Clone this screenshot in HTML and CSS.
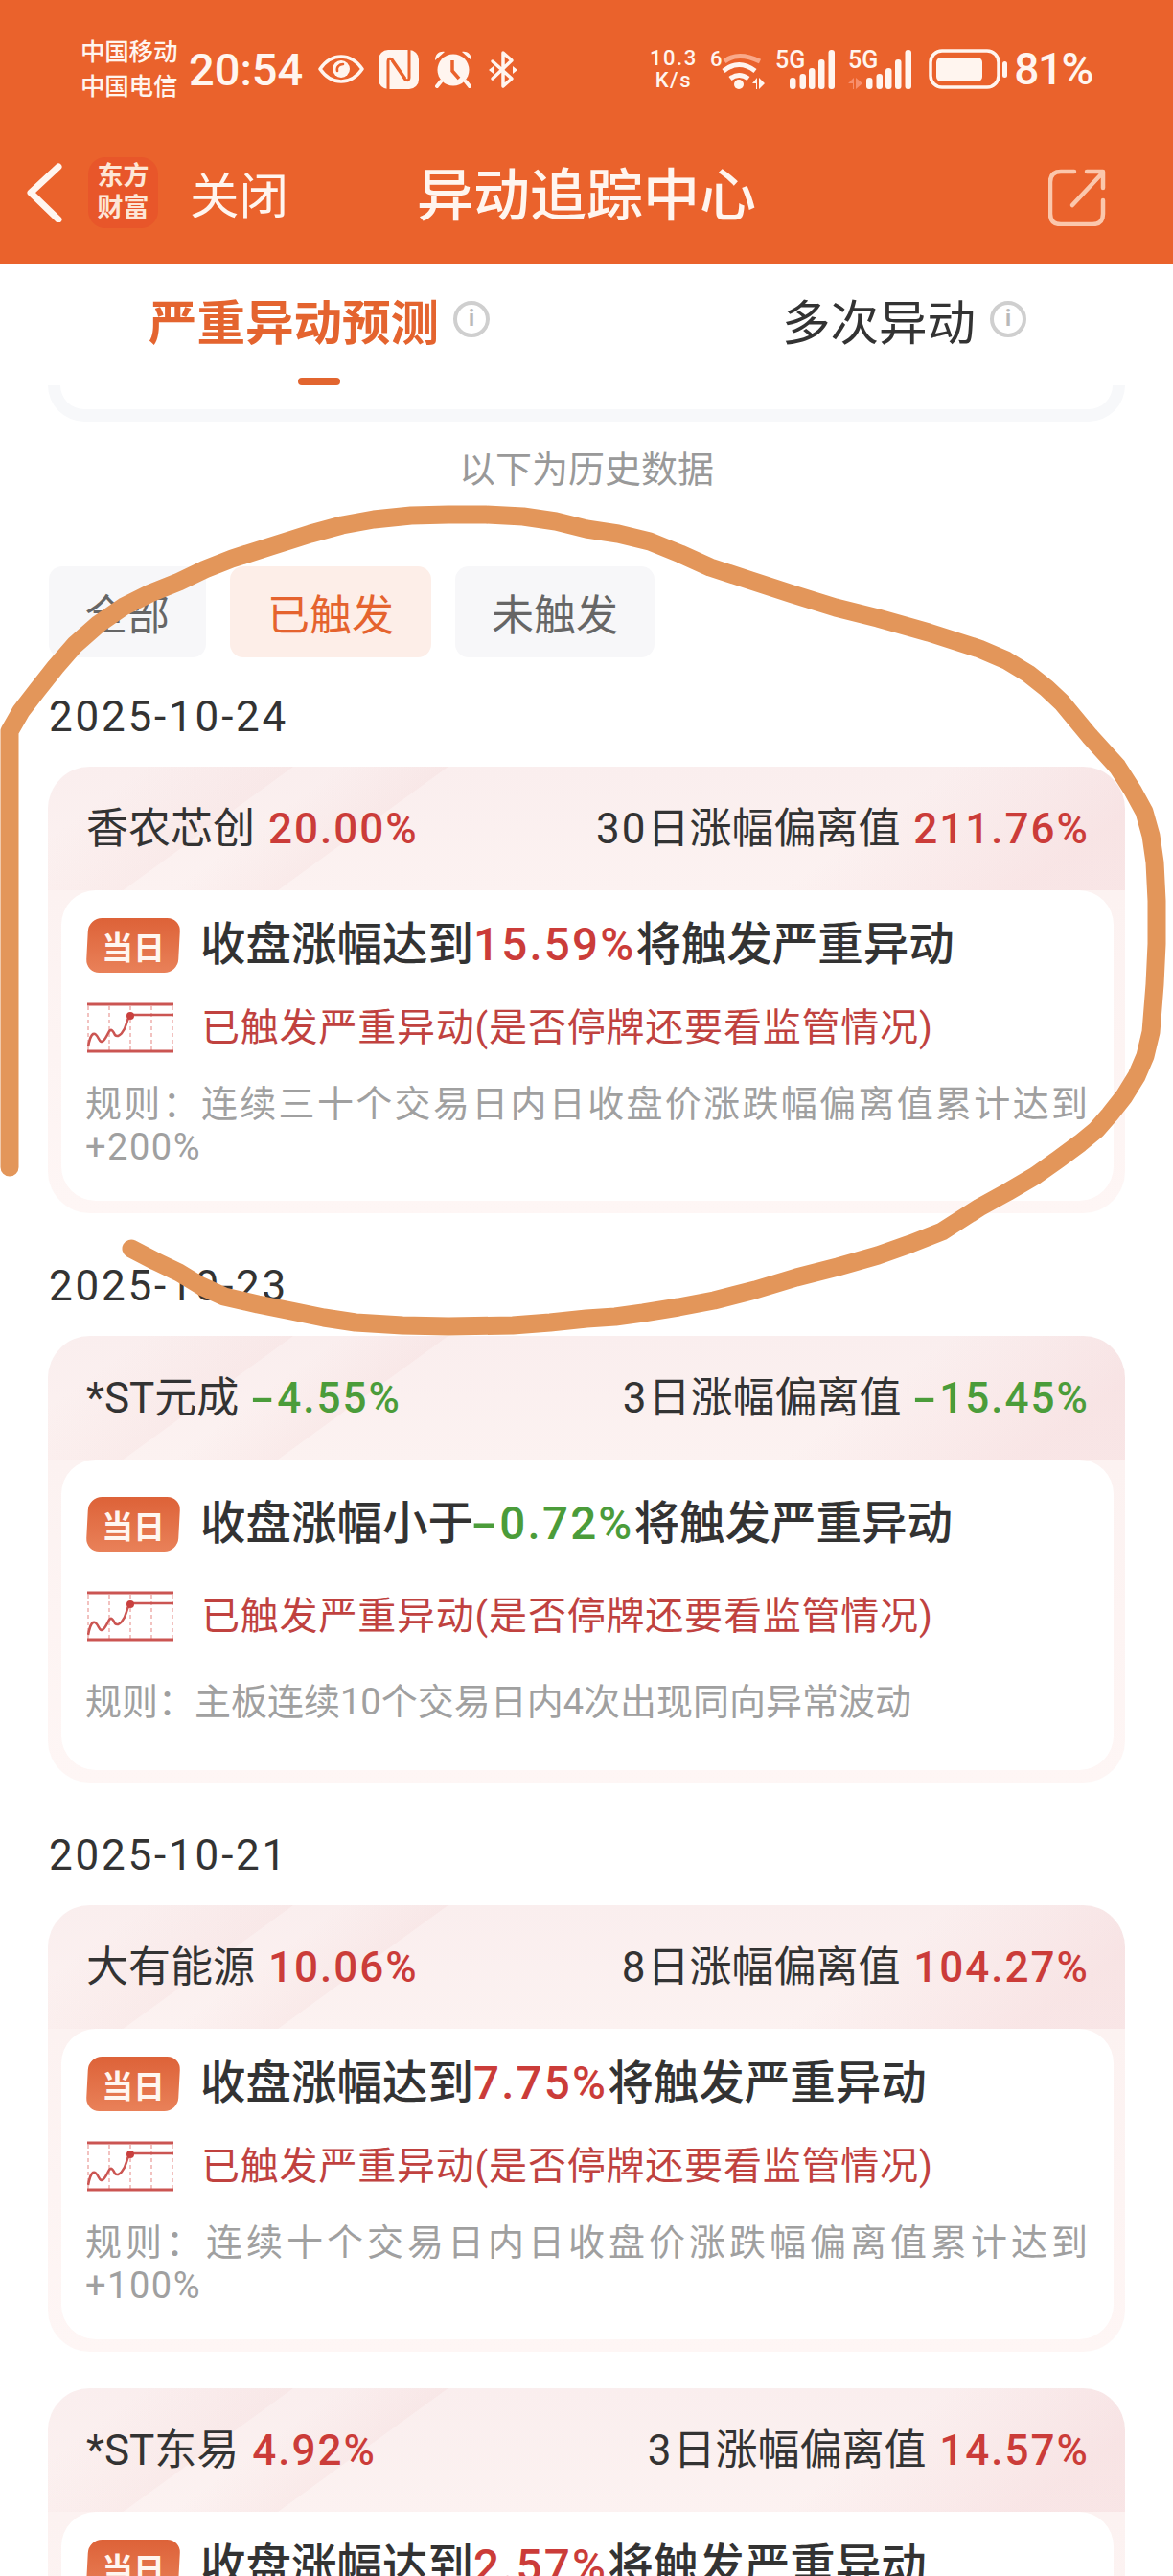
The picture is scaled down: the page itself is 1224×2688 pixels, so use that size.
FILE: index.html

```html
<!DOCTYPE html>
<html lang="zh-CN">
<head>
    <meta charset="UTF-8">
    <meta name="viewport" content="width=device-width, initial-scale=1.0">
    <title>异动追踪中心</title>
    <link rel="stylesheet" href="styles.css">
</head>
<body>

<header class="top">
    <div class="status">
        <div class="carrier">
            <span>中国移动</span>
            <span>中国电信</span>
        </div>
        <span class="time">20:54</span>
        <svg class="ic-eye" width="48" height="30" viewBox="0 0 48 30">
            <path d="M2 15C9 5 17 2 24 2s15 3 22 13c-7 10-15 13-22 13S9 25 2 15z" fill="none" stroke="#fff5ef" stroke-width="3.5" stroke-linejoin="round"/>
            <circle cx="24" cy="15" r="9" fill="#fff5ef"/>
            <path d="M20 17c-1-4 2-7 6-7" fill="none" stroke="#ea622c" stroke-width="2.6" stroke-linecap="round"/>
        </svg>
        <svg class="ic-nfc" width="42" height="41" viewBox="0 0 42 41">
            <rect width="42" height="41" rx="10" fill="#fff5ef"/>
            <path d="M10 41V12q0-4 4-2l14 20M32 0v29q0 4-4 2L14 11" fill="none" stroke="#ea622c" stroke-width="3"/>
        </svg>
        <svg class="ic-alarm" width="42" height="40" viewBox="0 0 42 40">
            <circle cx="21" cy="21" r="16.5" fill="#fff5ef"/>
            <path d="M2 11C2 4 7 1 12 2zM40 11c0-7-5-10-10-9z" fill="#fff5ef"/>
            <path d="M8 33l-4 5M34 33l4 5" stroke="#fff5ef" stroke-width="4" stroke-linecap="round"/>
            <path d="M20 11v11l7 8" fill="none" stroke="#ea622c" stroke-width="3.5"/>
        </svg>
        <svg class="ic-bt" width="32" height="41" viewBox="0 0 32 41">
            <path d="M5 12l20 18-9 8V3l9 8L5 30" fill="none" stroke="#fff5ef" stroke-width="3.5" stroke-linejoin="round" stroke-linecap="round"/>
            <path d="M1 21l5-4v8zM31 21l-5-4v8z" fill="#fff5ef"/>
        </svg>

        <div class="status-right">
            <div class="speed">
                <span>10.3</span>
                <span>K/s</span>
            </div>
            <svg class="ic-wifi" width="57" height="54" viewBox="0 -6 57 54">
                <text class="sig-text" x="0" y="18" font-size="22">6</text>
                <path d="M15 13q14-11 37 0" fill="none" stroke="#f9a98a" stroke-width="5"/>
                <path d="M14 23q16-13 33 0" fill="none" stroke="#fff5ef" stroke-width="5"/>
                <path d="M21 31q9-7 19 0" fill="none" stroke="#fff5ef" stroke-width="5"/>
                <circle cx="30" cy="37" r="5" fill="#fff5ef"/>
                <path d="M44 36l5-6v12h-1v-6zM51 30v12l6-6z" fill="#fff5ef"/>
            </svg>
            <svg class="ic-signal" width="63" height="54" viewBox="0 -6 63 54">
                <text class="sig-text" x="0" y="20" font-size="25">5G</text>
                <rect x="15" y="30" width="6.5" height="12" rx="3" fill="#fff5ef"/>
                <rect x="25.5" y="26" width="6.5" height="16" rx="3" fill="#fff5ef"/>
                <rect x="35" y="20" width="6.5" height="22" rx="3" fill="#fff5ef"/>
                <rect x="45" y="11" width="6.5" height="31" rx="3" fill="#fff5ef"/>
                <rect x="55.5" y="1" width="6.5" height="41" rx="3" fill="#fff5ef"/>
            </svg>
            <svg class="ic-signal" width="67" height="54" viewBox="0 -6 67 54">
                <text class="sig-text" x="0" y="20" font-size="25">5G</text>
                <path d="M0 36l6-6v12h-1v-6zM8 30v12l7-6z" fill="#f78f6c"/>
                <rect x="19" y="30" width="6.5" height="12" rx="3" fill="#fff5ef"/>
                <rect x="29.5" y="26" width="6.5" height="16" rx="3" fill="#fff5ef"/>
                <rect x="39" y="20" width="6.5" height="22" rx="3" fill="#fff5ef"/>
                <rect x="49" y="11" width="6.5" height="31" rx="3" fill="#fff5ef"/>
                <rect x="59.5" y="1" width="6.5" height="41" rx="3" fill="#fff5ef"/>
            </svg>
            <svg class="ic-battery" width="82" height="42" viewBox="0 0 82 42">
                <rect x="2" y="2" width="71" height="38" rx="12" fill="none" stroke="#fff5ef" stroke-width="3.5"/>
                <rect x="8" y="9" width="48" height="25" rx="5" fill="#fff5ef"/>
                <rect x="77" y="13" width="5" height="17" rx="2.5" fill="#fff5ef"/>
            </svg>
            <span class="percent">81%</span>
        </div>
    </div>

    <nav class="nav">
        <div class="nav-left">
            <svg class="ic-back" width="38" height="62" viewBox="0 0 38 62">
                <path d="M33 4L4 31l29 28" fill="none" stroke="#fff5ef" stroke-width="7" stroke-linecap="round" stroke-linejoin="round"/>
            </svg>
            <div class="logo">
                <span>东方</span>
                <span>财富</span>
            </div>
            <span class="close">关闭</span>
        </div>
        <h1 class="title">异动追踪中心</h1>
        <div class="nav-right">
            <svg width="60" height="60" viewBox="0 0 60 60">
                <path d="M27 3H13Q2 3 2 14v33q0 11 11 11h33q11 0 11-11V33" fill="none" stroke="#fbc7ac" stroke-width="4.5" stroke-linecap="round"/>
                <path d="M25 38L55 6M40 3h17v17" fill="none" stroke="#fbc7ac" stroke-width="4.5" stroke-linecap="round" stroke-linejoin="round"/>
            </svg>
        </div>
    </nav>
</header>

<div class="tabs">
    <div class="tab active">
        <span>严重异动预测</span>
        <span class="info">i</span>
    </div>
    <div class="tab">
        <span>多次异动</span>
        <span class="info">i</span>
    </div>
</div>

<main class="content">
    <div class="prev-card"></div>
    <p class="history-note">以下为历史数据</p>

    <div class="filters">
        <span class="chip chip-all">全部</span>
        <span class="chip chip-on">已触发</span>
        <span class="chip chip-off">未触发</span>
    </div>

    <div class="date">2025-10-24</div>
    <section class="card">
        <div class="card-head">
            <div>香农芯创 <span class="num up">20.00%</span></div>
            <div><span class="num">30</span>日涨幅偏离值 <span class="num up">211.76%</span></div>
        </div>
        <div class="card-body">
            <div class="row">
                <span class="badge"><span>当日</span></span>
                <span class="cond">收盘涨幅达到<span class="num up">15.59%</span>将触发严重异动</span>
            </div>
            <div class="row">
                <svg class="trend" width="90" height="53" viewBox="0 0 90 53">
                    <path d="M1 4v46M23 4v46M45 4v46M67 4v46M89 4v46" stroke="#eeaeac" stroke-width="1.5" stroke-dasharray="4 3"/>
                    <path d="M0 2h90M0 51h90" stroke="#cb5552" stroke-width="3"/>
                    <path d="M1 46C4 30 8 30 12 38c3 6 6 2 10-6 3-6 5-2 7 2 4 4 10-4 12-12q2-8 6-9h43" fill="none" stroke="#cb5552" stroke-width="2.6"/>
                    <circle cx="45" cy="14" r="4" fill="#c9403e"/>
                </svg>
                <span class="fired">已触发严重异动(是否停牌还要看监管情况)</span>
            </div>
            <p class="rule">规则：连续三十个交易日内日收盘价涨跌幅偏离值累计达到<span class="rule-pct">+200%</span></p>
        </div>
    </section>

    <div class="date">2025-10-23</div>
    <section class="card">
        <div class="card-head">
            <div>*ST元成 <span class="num down"><span class="minus">-</span>4.55%</span></div>
            <div><span class="num">3</span>日涨幅偏离值 <span class="num down"><span class="minus">-</span>15.45%</span></div>
        </div>
        <div class="card-body card-body-short">
            <div class="row">
                <span class="badge"><span>当日</span></span>
                <span class="cond">收盘涨幅小于<span class="num down"><span class="minus">-</span>0.72%</span>将触发严重异动</span>
            </div>
            <div class="row">
                <svg class="trend" width="90" height="53" viewBox="0 0 90 53">
                    <path d="M1 4v46M23 4v46M45 4v46M67 4v46M89 4v46" stroke="#eeaeac" stroke-width="1.5" stroke-dasharray="4 3"/>
                    <path d="M0 2h90M0 51h90" stroke="#cb5552" stroke-width="3"/>
                    <path d="M1 46C4 30 8 30 12 38c3 6 6 2 10-6 3-6 5-2 7 2 4 4 10-4 12-12q2-8 6-9h43" fill="none" stroke="#cb5552" stroke-width="2.6"/>
                    <circle cx="45" cy="14" r="4" fill="#c9403e"/>
                </svg>
                <span class="fired">已触发严重异动(是否停牌还要看监管情况)</span>
            </div>
            <p class="rule">规则：主板连续10个交易日内4次出现同向异常波动</p>
        </div>
    </section>

    <div class="date">2025-10-21</div>
    <section class="card">
        <div class="card-head">
            <div>大有能源 <span class="num up">10.06%</span></div>
            <div><span class="num">8</span>日涨幅偏离值 <span class="num up">104.27%</span></div>
        </div>
        <div class="card-body">
            <div class="row">
                <span class="badge"><span>当日</span></span>
                <span class="cond">收盘涨幅达到<span class="num up">7.75%</span>将触发严重异动</span>
            </div>
            <div class="row">
                <svg class="trend" width="90" height="53" viewBox="0 0 90 53">
                    <path d="M1 4v46M23 4v46M45 4v46M67 4v46M89 4v46" stroke="#eeaeac" stroke-width="1.5" stroke-dasharray="4 3"/>
                    <path d="M0 2h90M0 51h90" stroke="#cb5552" stroke-width="3"/>
                    <path d="M1 46C4 30 8 30 12 38c3 6 6 2 10-6 3-6 5-2 7 2 4 4 10-4 12-12q2-8 6-9h43" fill="none" stroke="#cb5552" stroke-width="2.6"/>
                    <circle cx="45" cy="14" r="4" fill="#c9403e"/>
                </svg>
                <span class="fired">已触发严重异动(是否停牌还要看监管情况)</span>
            </div>
            <p class="rule">规则：连续十个交易日内日收盘价涨跌幅偏离值累计达到<span class="rule-pct">+100%</span></p>
        </div>
    </section>

    <section class="card">
        <div class="card-head">
            <div>*ST东易 <span class="num up">4.92%</span></div>
            <div><span class="num">3</span>日涨幅偏离值 <span class="num up">14.57%</span></div>
        </div>
        <div class="card-body">
            <div class="row">
                <span class="badge"><span>当日</span></span>
                <span class="cond">收盘涨幅达到<span class="num up">2.57%</span>将触发严重异动</span>
            </div>
        </div>
    </section>
</main>

<!-- hand drawn circle on top of the screenshot -->
<svg class="scribble" width="1224" height="2688" viewBox="0 0 1224 2688">
    <polyline points="10,1218 10,763 22,742 39,720 58,696 78,673 103,651 129,633 157,619 187,607 214,594 242,583 283,570 324,557 357,548 390,542 429,538 468,537 507,537 546,539 580,544 612,552 645,557 678,565 710,578 741,592 784,606 827,620 872,634 916,645 969,660 1022,677 1050,689 1073,703 1092,718 1108,733 1137,768 1166,800 1182,825 1194,847 1201,872 1205,900 1207,940 1207,985 1205,1027 1201,1077 1195,1102 1186,1123 1173,1144 1158,1163 1144,1179 1127,1193 1104,1210 1080,1227 1051,1244 1022,1260 983,1285 950,1298 916,1310 874,1322 831,1333 788,1346 745,1357 708,1364 671,1370 642,1374 612,1376 574,1380 535,1383 468,1384 420,1383 371,1380 338,1375 304,1368 269,1361 234,1353 210,1342 187,1328 162,1316 137,1303" fill="none" stroke="#e3965a" stroke-width="19" stroke-linecap="round" stroke-linejoin="round"/>
</svg>

</body>
</html>
```

FILE: styles.css

```css
html, body {
    margin: 0;
    padding: 0;
}
body {
    position: relative;
    width: 1224px;
    height: 2688px;
    overflow: hidden;
    background: #fff;
    font-family: Roboto, "Noto Sans CJK SC", sans-serif;
    color: #333;
}

/* orange header */
.top {
    height: 275px;
    background: #ea622c;
    color: #fff5ef;
}
.status {
    display: flex;
    align-items: center;
    height: 144px;
    padding: 0 84px;
}
.carrier {
    display: flex;
    flex-direction: column;
    width: 102px;
    font-size: 25.5px;
    line-height: 36px;
    font-weight: 500;
    white-space: nowrap;
    letter-spacing: -.2px;
}
.time {
    margin-left: 11px;
    width: 118px;
    font-size: 47px;
    font-weight: 500;
    white-space: nowrap;
}
.ic-eye { margin-left: 17px; }
.ic-nfc, .ic-alarm, .ic-bt { margin-left: 15px; }
.status-right {
    display: flex;
    align-items: center;
    margin-left: auto;
}
.speed {
    display: flex;
    flex-direction: column;
    align-items: center;
    width: 53px;
    font-size: 22px;
    line-height: 23px;
    font-weight: 500;
    letter-spacing: 1.5px;
}
.sig-text {
    fill: #fff5ef;
    font-weight: 500;
}
.ic-wifi { margin-left: 12px; }
.ic-signal { margin-left: 11px; }
.ic-signal + .ic-signal { margin-left: 13px; }
.ic-battery { margin-left: 17px; }
.percent {
    margin-left: 7px;
    font-size: 46px;
    font-weight: 500;
    letter-spacing: -1.5px;
}

.nav {
    display: grid;
    grid-template-columns: 1fr auto 1fr;
    align-items: center;
    height: 113px;
    padding-bottom: 18px;
}
.nav-left {
    display: flex;
    align-items: center;
    padding-left: 28px;
}
.logo {
    display: flex;
    flex-direction: column;
    align-items: center;
    justify-content: center;
    width: 73px;
    height: 74px;
    margin-left: 26px;
    background: #e8562a;
    border-radius: 18px;
    font-size: 27px;
    line-height: 33px;
    font-weight: 700;
    color: #fde6d6;
}
.close {
    margin-left: 33px;
    font-size: 51.5px;
}
.title {
    margin: 0 0 2px;
    font-size: 59px;
    font-weight: 500;
}
.nav-right {
    display: flex;
    justify-content: flex-end;
    padding: 10px 70px 0 0;
}

/* tabs */
.tabs {
    display: flex;
    justify-content: space-between;
    align-items: center;
    height: 127px;
    padding: 0 153px 0 155px;
    box-sizing: border-box;
    background: #fff;
}
.tab {
    position: relative;
    display: flex;
    align-items: center;
    gap: 15px;
    height: 127px;
    padding-bottom: 12px;
    box-sizing: border-box;
    font-size: 50.5px;
    color: #333;
}
.tab.active {
    color: #e4642f;
    font-weight: 700;
}
.tab.active::after {
    content: "";
    position: absolute;
    left: 50%;
    bottom: 0;
    width: 44px;
    height: 8px;
    margin-left: -22px;
    border-radius: 4px;
    background: #e2652f;
}
.info {
    display: flex;
    align-items: center;
    justify-content: center;
    width: 30px;
    height: 30px;
    border: 4px solid #cfcfcf;
    border-radius: 50%;
    font-size: 23px;
    font-weight: 700;
    color: #b9b9b9;
}

.content {
    padding: 0 50px;
}
.prev-card {
    height: 25px;
    border: 13px solid #f7f8fa;
    border-top: 0;
    border-radius: 0 0 42px 42px;
}
.history-note {
    margin: 0;
    height: 100px;
    line-height: 100px;
    text-align: center;
    font-size: 38px;
    color: #999;
}
.filters {
    display: flex;
    gap: 25px;
    margin: 51px 0 0 1px;
}
.chip {
    display: flex;
    align-items: center;
    justify-content: center;
    height: 95px;
    border-radius: 14px;
    background: #f7f7f9;
    font-size: 44px;
    color: #666;
}
.chip-all { width: 164px; }
.chip-on {
    width: 210px;
    background: #fdeee8;
    color: #e5632e;
}
.chip-off { width: 208px; }

.date {
    height: 90px;
    padding-left: 1px;
    line-height: 77px;
    font-size: 44px;
    letter-spacing: 2.8px;
}
.filters + .date {
    margin-top: 24px;
    line-height: 76px;
}

/* alert cards */
.card {
    height: 466px;
    margin-bottom: 38px;
    box-sizing: border-box;
    padding: 0 12px 13px 14px;
    border-radius: 44px;
    background:
        linear-gradient(144deg, transparent 60px, rgba(236, 190, 190, .13) 150px, transparent 151px, transparent 180px, rgba(236, 190, 190, .14) 245px, transparent 246px, transparent 555px, rgba(236, 185, 190, .22) 700px) no-repeat 0 0 / 100% 129px,
        linear-gradient(180deg, #faeeee 0, #fcf2f1 28%, #fef6f5 100%);
}
.card-head {
    display: flex;
    justify-content: space-between;
    align-items: center;
    height: 129px;
    padding: 0 25px 0 26px;
    box-sizing: border-box;
    font-size: 44px;
    line-height: 60px;
    white-space: nowrap;
}
.card-head .up, .card-head .down {
    margin-left: 3px;
}
.num {
    letter-spacing: 2px;
}
.up, .down {
    font-weight: 500;
}
.up { color: #cb3c39; }
.down { color: #4b9c3a; }
.minus {
    display: inline-block;
    margin: 0 5px 0 4px;
    transform: scaleX(1.7);
}
.card-body {
    display: flex;
    flex-direction: column;
    gap: 31px;
    height: 324px;
    box-sizing: border-box;
    padding: 29px 27px 0 25px;
    background: #fff;
    border-radius: 36px;
}
.card-body-short {
    gap: 41px;
    padding-top: 39px;
}
.row {
    display: flex;
    align-items: center;
}
.badge {
    display: flex;
    align-items: center;
    justify-content: center;
    flex: none;
    width: 96px;
    height: 57px;
    margin-left: 2px;
    border-radius: 14px;
    background: linear-gradient(180deg, #dd6238, #e98159);
    transform: skewX(-3deg);
    color: #fff6f0;
    font-size: 33px;
    font-weight: 700;
}
.badge span {
    transform: skewX(3deg);
}
.cond {
    margin-left: 22px;
    font-size: 47.5px;
    line-height: 57px;
    font-weight: 500;
    white-space: nowrap;
}
.cond .num {
    letter-spacing: 2.2px;
}
.trend {
    flex: none;
    margin-left: 2px;
}
.fired {
    margin-left: 29px;
    font-size: 40px;
    line-height: 53px;
    color: #c0423f;
    white-space: nowrap;
    letter-spacing: .8px;
}
.rule {
    margin: 0;
    font-size: 38px;
    line-height: 45px;
    color: #a0a0a0;
    text-align: justify;
}
.rule-pct {
    letter-spacing: 1.5px;
}

/* marker pen circle, drawn over the page */
.scribble {
    position: absolute;
    left: 0;
    top: 0;
    pointer-events: none;
}
```
